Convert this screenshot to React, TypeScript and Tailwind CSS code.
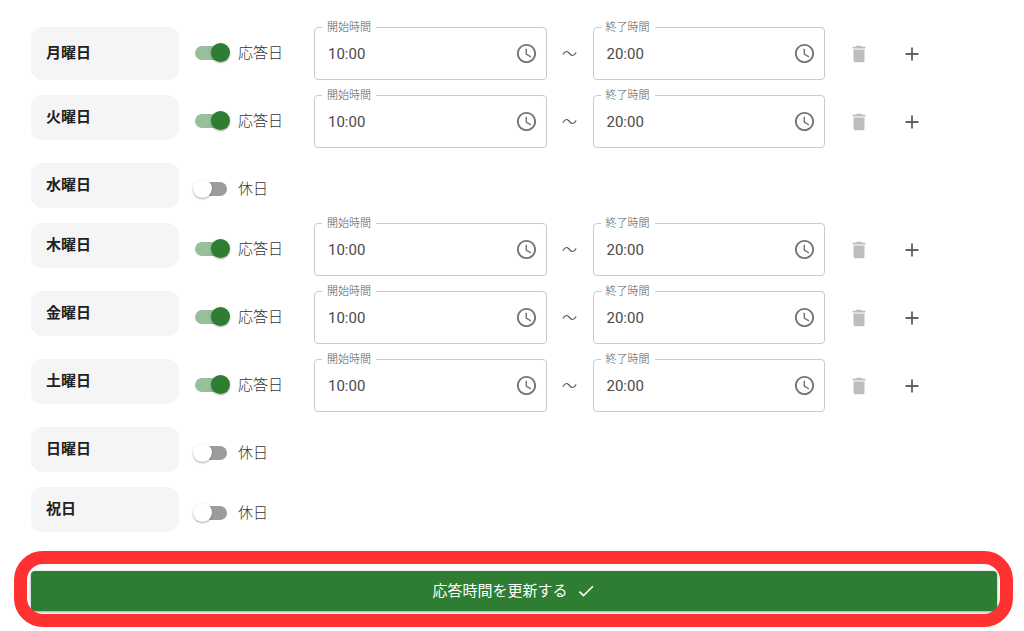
import { useState } from "react";

type Day = { name: string; open: boolean };

const initialDays: Day[] = [
  { name: "月曜日", open: true },
  { name: "火曜日", open: true },
  { name: "水曜日", open: false },
  { name: "木曜日", open: true },
  { name: "金曜日", open: true },
  { name: "土曜日", open: true },
  { name: "日曜日", open: false },
  { name: "祝日", open: false },
];

function Icon({ d, className }: { d: string; className: string }) {
  return (
    <svg viewBox="0 0 24 24" fill="currentColor" aria-hidden="true" className={className}>
      <path d={d} />
    </svg>
  );
}

const CLOCK =
  "M11.99 2C6.47 2 2 6.48 2 12s4.47 10 9.99 10C17.52 22 22 17.52 22 12S17.52 2 11.99 2zM12 20c-4.42 0-8-3.58-8-8s3.58-8 8-8 8 3.58 8 8-3.58 8-8 8zm.5-13H11v6l5.25 3.15.75-1.23-4.5-2.67z";
const TRASH = "M6 19c0 1.1.9 2 2 2h8c1.1 0 2-.9 2-2V7H6v12zM19 4h-3.5l-1-1h-5l-1 1H5v2h14V4z";
const PLUS = "M19 13h-6v6h-2v-6H5v-2h6V5h2v6h6v2z";
const CHECK = "M9 16.17 4.83 12l-1.42 1.41L9 19 21 7l-1.41-1.41z";

function TimeField({ id, label, value }: { id: string; label: string; value: string }) {
  return (
    <div className="relative flex h-[53px] min-w-0 flex-1 items-center rounded border border-[#cbcbcb] pl-[13px] pr-2">
      <label
        htmlFor={id}
        className="absolute -top-2 left-[7px] bg-white px-[5px] text-[11px] leading-4 font-light text-[#555]"
      >
        {label}
      </label>
      <input
        id={id}
        type="text"
        defaultValue={value}
        className="w-full min-w-0 flex-1 bg-transparent pt-[2px] text-[15px] text-[#4a4a4a] outline-none"
      />
      <button type="button" aria-label={label + "を選択"} className="text-[#757575]">
        <Icon d={CLOCK} className="size-[23px]" />
      </button>
    </div>
  );
}

function DayRow({ day, index, onToggle }: { day: Day; index: number; onToggle: () => void }) {
  return (
    <li className="flex items-start">
      <div
        className={
          "flex w-[148px] shrink-0 rounded-xl bg-[#f5f5f5] px-[15px] text-[15px] leading-[15px] font-bold text-[#212121] " +
          (index === 0 ? "h-[53px] pt-[19px]" : "h-[45px] pt-[15px]")
        }
      >
        {day.name}
      </div>
      <label className="-mb-2 ml-4 flex h-[52px] w-[119px] shrink-0 items-center gap-[11px] text-[15px] font-light text-[#333]">
        <input
          type="checkbox"
          checked={day.open}
          onChange={onToggle}
          className="relative h-[14px] w-8 appearance-none rounded-full bg-[#9c9c9c] before:absolute before:-top-[3px] before:-left-[2px] before:size-[19px] before:rounded-full before:bg-white before:shadow-[0_1px_2px_rgba(0,0,0,0.35)] checked:bg-[#97bf99] checked:before:left-4 checked:before:bg-[#2e7d32]"
        />
        {day.open ? "応答日" : "休日"}
      </label>
      {day.open && (
        <div className="flex min-w-0 flex-1 items-center">
          <TimeField id={`start-${index}`} label="開始時間" value="10:00" />
          <span className="w-[46px] pt-[2px] text-center text-[15px] font-light text-[#333]">～</span>
          <TimeField id={`end-${index}`} label="終了時間" value="20:00" />
          <div className="flex w-[172px] shrink-0 gap-[15px] pl-[15px]">
            <button type="button" disabled aria-label="削除" className="p-2 text-[#bdbdbd]">
              <Icon d={TRASH} className="size-[22px]" />
            </button>
            <button type="button" aria-label="追加" className="p-2 text-[#616161]">
              <Icon d={PLUS} className="size-[22px]" />
            </button>
          </div>
        </div>
      )}
    </li>
  );
}

export default function App() {
  const [days, setDays] = useState(initialDays);
  const toggle = (index: number) =>
    setDays(days.map((d, i) => (i === index ? { ...d, open: !d.open } : d)));

  return (
    <main className="bg-white pt-[27px] pr-[27px] pb-5 pl-[31px] font-[Roboto,'Noto_Sans_CJK_JP',sans-serif]">
      <ul className="flex flex-col gap-[15px]">
        {days.map((day, i) => (
          <DayRow key={day.name} day={day} index={i} onToggle={() => toggle(i)} />
        ))}
      </ul>
      <div className="relative mt-[39px]">
        <button
          type="button"
          className="flex h-10 w-full items-center justify-center gap-2 rounded bg-[#2e7d32] text-[15px] leading-5 font-normal text-white shadow-[0_1px_3px_rgba(0,0,0,0.4)]"
        >
          応答時間を更新する
          <Icon d={CHECK} className="size-5" />
        </button>
        <div className="pointer-events-none absolute -top-5 -right-4 -bottom-4 -left-[17px] rounded-[29px] border-[13px] border-[#ff3131]" />
      </div>
    </main>
  );
}
